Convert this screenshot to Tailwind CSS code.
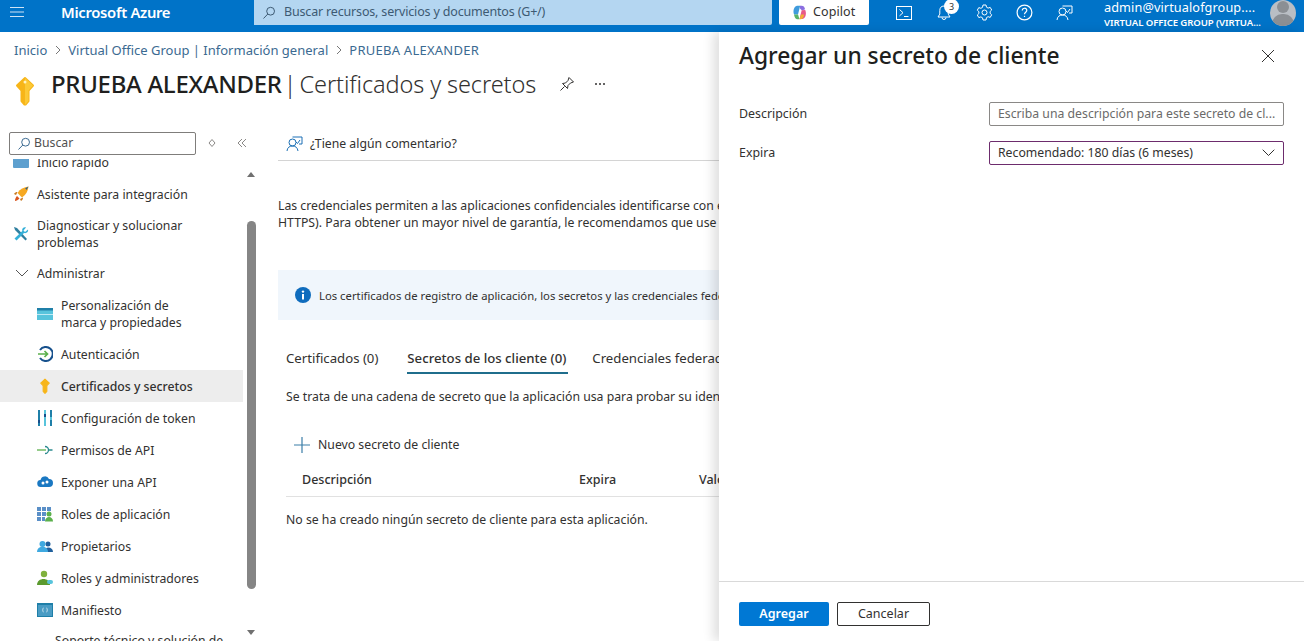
<!DOCTYPE html>
<html lang="es"><head><meta charset="utf-8"><script src="https://cdn.jsdelivr.net/npm/@tailwindcss/browser@4"></script></head>
<body class="font-['Noto_Sans',sans-serif] text-[#323130] bg-white">
<div class="relative w-[1304px] h-[641px] overflow-hidden flex flex-col">
<!-- top bar -->
<header class="h-8 shrink-0 bg-[#0073c8] text-white flex items-start">
  <div class="w-[33px] h-[24px] flex items-center justify-center">
    <svg width="16" height="12" viewBox="0 0 16 12" stroke="#cfe4f6" stroke-width="1.2"><path d="M1 1.5h14M1 6h14M1 10.5h14"/></svg>
  </div>
  <div class="ml-7 w-[193px] h-[25px] leading-[25px] text-[14.8px] font-semibold tracking-[-0.3px]">Microsoft Azure</div>
  <div class="w-[518px] h-[25px] bg-[#b4d6f1] rounded-br-[2px] flex items-center pl-2 text-[12.5px] text-[#3d5a73]">
    <svg width="14" height="14" viewBox="0 0 14 14" fill="none" stroke="#3d5a73" stroke-width="1" class="mr-[8px]"><circle cx="8.6" cy="5.2" r="3.9"/><path d="M5.8 8 1.5 12.5"/></svg>
    <span class="tracking-[-0.17px]">Buscar recursos, servicios y documentos (G+/)</span>
  </div>
  <div class="ml-[7px] w-[90px] h-[25px] bg-white rounded-b-[2px] flex items-center pl-[13px] gap-[6px] text-[12.5px] text-[#323130]">
    <svg width="15" height="15" viewBox="0 0 15 15"><path d="M5 .8h3.2L6 9.5H2.2C.6 7 1.6 1.6 5 .8Z" fill="#3f9bdc"/><path d="M8 .8h1.5c2 0 3 1 3.6 3.5L10 5.5 8 3.5Z" fill="#8a6ee0"/><path d="M13.2 5c1.5 3.5.6 8-2.7 9H7.5L9.7 5.3Z" fill="#e85a8a"/><path d="M2 9.5h4l1.5 4.7H5c-1.6 0-2.6-2-3-4.7Z" fill="#58b368"/><path d="M7.5 14.2 9 9.5h3.2c-.4 2.4-1.6 4.7-3.2 4.7Z" fill="#f2b035"/></svg>
    <span class="tracking-[0.1px]">Copilot</span>
  </div>
  <div class="ml-[15px] flex w-[200px] h-[25px] items-center">
    <div class="w-10 flex justify-center"><svg width="16" height="14" viewBox="0 0 16 14" fill="none" stroke="#fff" stroke-width="1"><rect x=".5" y=".5" width="15" height="13"/><path d="m3.5 3.5 3.5 3.2-3.5 3.2M8 10.500h4.500"/></svg></div>
    <div class="w-10 flex justify-center relative"><svg width="16" height="17" viewBox="0 0 16 17" fill="none" stroke="#fff" stroke-width="1"><path d="M8 2C5 2 3.800 4 3.800 6.500v3.600L2 13h12l-1.800-2.900V6.500C12.200 4 11 2 8 2ZM6 13.500a2 2 0 0 0 4 0"/></svg>
      <span class="absolute left-[20px] top-[-5px] w-[15px] h-[15px] rounded-full bg-white text-[#323130] text-[9px] leading-[15px] text-center">3</span></div>
    <div class="w-10 flex justify-center"><svg width="17" height="17" viewBox="0 0 17 17" fill="none" stroke="#fff" stroke-width="1"><path d="M7 1h3l.5 2.200 1.600.9 2.100-.7 1.500 2.600-1.600 1.500v1.800l1.600 1.500-1.500 2.600-2.100-.7-1.600.9L10 16H7l-.5-2.200-1.600-.9-2.100.7L1.300 11l1.600-1.500V7.700L1.300 6.200l1.500-2.600 2.100.7 1.600-.9Z"/><circle cx="8.500" cy="8.500" r="2.500"/></svg></div>
    <div class="w-10 flex justify-center"><svg width="17" height="17" viewBox="0 0 17 17" fill="none" stroke="#fff" stroke-width="1.200"><circle cx="8.500" cy="8.500" r="7.400"/><path d="M6.300 6.500c0-3 4.500-3 4.500-.2 0 2-2.300 1.800-2.300 4"/><path d="M8.500 11.800v1.200"/></svg></div>
    <div class="w-10 flex justify-center"><svg width="17" height="17" viewBox="0 0 17 17" fill="none" stroke="#fff" stroke-width="1"><path d="M6.500 2H16v7h-3"/><path d="m10 7 1.500 1.500L14 5"/><circle cx="6.500" cy="7.500" r="3.500"/><path d="M1 16c.3-3.500 2.500-5 5.500-5s5 1.500 5.500 5"/></svg></div>
  </div>
  <div class="ml-5 w-[166px] h-8 relative">
    <div class="text-[12.7px] leading-[14px] whitespace-nowrap tracking-[0.1px]">admin@virtualofgroup....</div>
    <div class="text-[9.6px] leading-[12px] mt-[3px] font-semibold whitespace-nowrap tracking-[-0.1px]">VIRTUAL OFFICE GROUP (VIRTUA...</div>
  </div>
  <div class="w-[26px] h-[26px] rounded-full bg-[#b9bec4] overflow-hidden relative shrink-0">
    <span class="absolute left-[7px] top-[1px] w-3 h-3 rounded-full bg-[#8b8f94]"></span>
    <span class="absolute left-[2px] top-[14px] w-[22px] h-5 rounded-full bg-[#8b8f94]"></span>
  </div>
</header>
<!-- page -->
<div class="pt-[9px] pl-[14px] h-[18px] box-content text-[13px] leading-[18px] text-[#3b6a91] flex items-center whitespace-nowrap">
  <span>Inicio</span>
  <svg width="8" height="10" viewBox="0 0 8 10" fill="none" stroke="#777" class="mx-[6.5px]"><path d="m2 1 4 4-4 4"/></svg>
  <span>Virtual Office Group | Información general</span>
  <svg width="8" height="10" viewBox="0 0 8 10" fill="none" stroke="#777" class="mx-[6.5px]"><path d="m2 1 4 4-4 4"/></svg>
  <span class="tracking-[0.25px]">PRUEBA ALEXANDER</span>
</div>
<div class="mt-[7px] h-[36px] pl-[15px] flex items-center whitespace-nowrap">
  <svg width="20" height="30" viewBox="0 0 20 30" class="mr-[16px] mt-[14px] shrink-0"><path d="M10 2 18 9.500 13.500 14.500V25l-3 3.500h-1L6.500 25V14.500L2 9.500Z" fill="#f7b519" stroke="#f7b519" stroke-width="2" stroke-linejoin="round"/><path d="M10 2 18 9.500 13.500 14.500V25l-3 3.500H10Z" fill="#fcc936"/><circle cx="10" cy="6" r="1.500" fill="#fff3c4"/></svg>
  <span class="text-[24px] leading-[36px] font-medium text-[#201f1e] tracking-[-0.3px]">PRUEBA ALEXANDER</span>
  <span class="text-[23.5px] leading-[36px] font-light text-[#323130] ml-[2px] -mr-[3px]">|</span>
  <span class="text-[23.5px] leading-[36px] font-light text-[#323130] ml-[6px] tracking-[-0.1px]">Certificados y secretos</span>
  <svg width="16" height="16" viewBox="0 0 16 16" fill="none" stroke="#323130" class="ml-[23px]"><path d="M10 1.500 14.500 6l-3 1-2.500 2.500-.5 3L3.500 7.500l3-.5L9 4.500ZM5.500 10.500 1.500 14.500"/></svg>
  <span class="ml-[20px] flex gap-[2px] mb-[1px]"><i class="w-[2px] h-[2px] bg-[#323130] rounded-full"></i><i class="w-[2px] h-[2px] bg-[#323130] rounded-full"></i><i class="w-[2px] h-[2px] bg-[#323130] rounded-full"></i></span>
</div>
<div class="flex flex-1 min-h-0 mt-[30px]">
  <!-- sidebar -->
  <aside class="w-[278px] shrink-0 flex flex-col min-h-0 relative">
    <div class="h-[27px] flex items-start shrink-0">
      <div class="ml-[9px] w-[187px] h-[23px] border border-[#7f7d7b] rounded-[2px] flex items-center pl-[7px] text-[12.25px] text-[#505050]">
        <svg width="14" height="14" viewBox="0 0 14 14" fill="none" stroke="#3b6a91" class="mr-[3px]"><circle cx="8.600" cy="5.200" r="3.900"/><path d="M5.800 8 1.500 12.500"/></svg>Buscar
      </div>
      <svg width="10" height="10" viewBox="0 0 10 10" fill="none" stroke="#8a8886" class="ml-[11px] mt-[6px]"><path d="M5 1.500 8 5 5 8.500 2 5Z"/></svg>
      <svg width="10" height="10" viewBox="0 0 10 10" fill="none" stroke="#8a8886" class="ml-[20px] mt-[6px]"><path d="M5 1 1 5l4 4M9 1 5 5l4 4"/></svg>
    </div>
    <div class="flex min-h-0 flex-1">
      <nav class="w-[243px] shrink-0 overflow-hidden text-[12.25px] leading-[17px] text-[#323130]">
        <div class="-mt-[13px]">
          <div class="h-8 flex items-center pl-[13px]"><svg width="16" height="14" viewBox="0 0 16 14" class="mr-2"><rect y="1" width="16" height="12" rx="1" fill="#5ea0cf"/></svg>Inicio rápido</div>
          <div class="h-8 flex items-center pl-[13px]"><svg width="16" height="16" viewBox="0 0 16 16" class="mr-2"><path d="M15.500.5C11 1 7 3 4.500 7l4.500 4.500C13 9 15 5 15.500.5Z" fill="#f6a821"/><path d="M2 15c0-2 .8-4 2-5l2.500 2.500C5 14 3.500 15 2 15Z" fill="#d9541e"/><path d="M1 8c1-1.500 2-2 3.500-2L3 9ZM8 15c1.500-1 2-2 2-3.500L7 13Z" fill="#c9791e"/><path d="M12 2.500c.8.200 1.300.7 1.500 1.500L15.500.5Z" fill="#1f5f9c"/></svg>Asistente para integración</div>
          <div class="h-12 flex items-center pl-[13px]"><svg width="16" height="16" viewBox="0 0 16 16" class="mr-2 shrink-0"><path d="M1 1l3 1 10 11-1.500 1.500L2 4Z" fill="#2f7f9f"/><path d="M15 3.500 12 6 10.500 4.500 13 1.500c-2-.8-4.500 1-3.700 3.500L1.500 12.500l2 2L11 7c2.500.8 4.700-1.500 4-3.500Z" fill="#35b0d8"/></svg><span>Diagnosticar y solucionar<br>problemas</span></div>
          <div class="h-[31px] flex items-center pl-[15px]"><svg width="14" height="9" viewBox="0 0 14 9" fill="none" stroke="#555" class="mr-[8px]"><path d="m1 1 6 6 6-6"/></svg>Administrar</div>
          <div class="h-[49px] flex items-center pl-[37px]"><svg width="16" height="12" viewBox="0 0 16 12" class="mr-2 shrink-0"><rect width="16" height="12" fill="#58c4dc"/><rect width="16" height="2.500" fill="#1f7fa8"/><rect y="6" width="16" height="1" fill="#bfeaf4"/></svg><span>Personalización de<br>marca y propiedades</span></div>
          <div class="h-8 flex items-center pl-[37px]"><svg width="16" height="16" viewBox="0 0 16 16" fill="none" class="mr-2"><path d="M3 4a7 7 0 1 1 0 8" stroke="#16508c" stroke-width="2"/><path d="M1 8h9M7.500 5 10.500 8l-3 3" stroke="#5bb04c" stroke-width="1.700"/></svg>Autenticación</div>
          <div class="h-8 flex items-center pl-[37px] bg-[#ededed] font-medium"><svg width="16" height="16" viewBox="0 0 20 30" class="mr-2"><path d="M10 2 18 9.500 13.500 14.500V25l-3 3.500h-1L6.500 25V14.500L2 9.500Z" fill="#f7b519" stroke="#f7b519" stroke-width="2" stroke-linejoin="round"/></svg>Certificados y secretos</div>
          <div class="h-8 flex items-center pl-[37px]"><svg width="16" height="16" viewBox="0 0 16 16" class="mr-2"><rect x="1" width="2" height="16" fill="#1f7fa8"/><rect x="7" width="2" height="16" fill="#58c4dc"/><rect x="13" width="2" height="16" fill="#1f7fa8"/><rect x="1" y="10" width="2" height="3" fill="#16508c"/><rect x="7" y="4" width="2" height="3" fill="#16508c"/><rect x="13" y="7" width="2" height="3" fill="#58c4dc"/></svg>Configuración de token</div>
          <div class="h-8 flex items-center pl-[37px]"><svg width="16" height="16" viewBox="0 0 16 16" fill="none" class="mr-2"><path d="M0 8h9" stroke="#5bb04c" stroke-width="1.300"/><path d="M8 4.500a3.500 3.500 0 0 1 0 7M11.500 8h4" stroke="#2b8a8f" stroke-width="1.300"/></svg>Permisos de API</div>
          <div class="h-8 flex items-center pl-[37px]"><svg width="16" height="16" viewBox="0 0 16 16" class="mr-2"><path d="M4 13a3.500 3.500 0 0 1-.500-7A4.500 4.500 0 0 1 12 5a4 4 0 0 1 0 8Z" fill="#1a78c2"/><circle cx="6" cy="9" r="1.500" fill="#fff"/><circle cx="10" cy="8" r="1.500" fill="#fff"/></svg>Exponer una API</div>
          <div class="h-8 flex items-center pl-[37px]"><svg width="16" height="16" viewBox="0 0 16 16" class="mr-2"><path d="M0 1h4v4H0ZM5 1h4v4H5ZM10 1h4v4h-4ZM0 6h4v4H0ZM5 6h4v4H5ZM0 11h4v4H0ZM5 11h3v4H5Z" fill="#5a8fc7"/><circle cx="12" cy="8" r="2.500" fill="#5bb04c"/><path d="M8 15.500c0-6 8-6 8 0Z" fill="#5bb04c"/></svg>Roles de aplicación</div>
          <div class="h-8 flex items-center pl-[37px]"><svg width="16" height="16" viewBox="0 0 16 16" class="mr-2"><circle cx="11" cy="6" r="2.500" fill="#1f5f9c"/><path d="M7 14c0-6 9-6 9 0Z" fill="#1f5f9c"/><circle cx="5.500" cy="6" r="3" fill="#3fa9e0"/><path d="M0 14c0-7 11-7 11 0Z" fill="#3fa9e0"/></svg>Propietarios</div>
          <div class="h-8 flex items-center pl-[37px]"><svg width="16" height="16" viewBox="0 0 16 16" class="mr-2"><circle cx="7" cy="4" r="3.200" fill="#7fb13c"/><path d="M0 15c0-8 13-8 13 0Z" fill="#5b9a2e"/><rect x="10" y="10" width="6" height="4" rx="2" fill="#58c4dc"/></svg>Roles y administradores</div>
          <div class="h-8 flex items-center pl-[37px]"><svg width="16" height="14" viewBox="0 0 16 14" class="mr-2"><rect width="16" height="14" fill="#1f7fa8"/><rect y="2" x="1" width="14" height="11" fill="#4a9cc4"/><path d="M6.500 5c-1 0-.5 2-1 2 .5 0 0 2 1 2M9.500 5c1 0 .5 2 1 2-.500 0 0 2-1 2" stroke="#fff" stroke-width=".7" fill="none"/></svg>Manifiesto</div>
          <div class="pt-[6px] pl-[55px] whitespace-nowrap">Soporte técnico y solución de</div>
        </div>
      </nav>
      <div class="w-[10px] ml-[3px] flex flex-col items-center relative">
        <span class="mt-[13px] w-0 h-0 border-x-[4px] border-x-transparent border-b-[5px] border-b-[#707070]"></span>
        <span class="mt-[44px] w-[9px] h-[368px] rounded-full bg-[#858585]"></span>
        <span class="mt-[41px] w-0 h-0 border-x-[4px] border-x-transparent border-t-[5px] border-t-[#707070]"></span>
      </div>
    </div>
  </aside>
  <!-- content -->
  <main class="flex-1 min-w-0 overflow-hidden text-[12.25px] leading-[17px] text-[#323130] -mt-[5px]">
    <div class="h-[34px] border-b border-[#d4d4d4] w-[460px] flex items-center pl-[8px] whitespace-nowrap">
      <svg width="17" height="17" viewBox="0 0 17 17" fill="none" stroke="#1a6fb5" class="mr-[7px]"><path d="M6.500 2H16v7h-3"/><path d="m10 7 1.500 1.500L14 5"/><circle cx="6.500" cy="7.500" r="3.500"/><path d="M1 16c.3-3.500 2.500-5 5.500-5s5 1.500 5.500 5"/></svg>¿Tiene algún comentario?
    </div>
    <div class="mt-[36px] whitespace-nowrap">Las credenciales permiten a las aplicaciones confidenciales identificarse con el servicio de autenticación<br>HTTPS). Para obtener un mayor nivel de garantía, le recomendamos que use un certificado</div>
    <div class="mt-[39px] h-[50px] bg-[#f0f6fc] flex items-center pl-[17px] text-[11.3px] whitespace-nowrap">
      <svg width="16" height="16" viewBox="0 0 16 16" class="mr-[8px] shrink-0"><circle cx="8" cy="8" r="8" fill="#0f6cbd"/><rect x="7" y="7" width="2" height="5.500" fill="#fff"/><circle cx="8" cy="4.600" r="1.200" fill="#fff"/></svg>Los certificados de registro de aplicación, los secretos y las credenciales federadas se pueden
    </div>
    <div class="mt-[30px] pl-[8px] h-[24px] flex whitespace-nowrap text-[13.2px]">
      <div>Certificados (0)</div>
      <div class="ml-[29px] h-[24px] border-b-2 border-[#1f6d8c] font-medium w-[161px]">Secretos de los cliente (0)</div>
      <div class="ml-[24px]">Credenciales federadas (0)</div>
    </div>
    <div class="mt-[14px] pl-[8px] whitespace-nowrap">Se trata de una cadena de secreto que la aplicación usa para probar su identidad</div>
    <div class="mt-[31px] pl-[16px] flex items-center whitespace-nowrap">
      <svg width="16" height="16" viewBox="0 0 16 16" stroke="#3b7ea8" stroke-width="1.200" class="mr-[8px]"><path d="M8 0v16M0 8h16"/></svg>Nuevo secreto de cliente
    </div>
    <div class="mt-[9px] ml-[8px] h-[35px] border-b border-[#e1e1e1] flex pt-[9px] font-medium whitespace-nowrap w-[452px] text-[12.5px]">
      <span class="ml-[16px] w-[277px]">Descripción</span><span class="w-[120px]">Expira</span><span>Valor</span>
    </div>
    <div class="mt-[14px] pl-[8px] whitespace-nowrap">No se ha creado ningún secreto de cliente para esta aplicación.</div>
  </main>
</div>
<!-- panel -->
<section class="absolute left-[719px] top-8 bottom-0 right-0 bg-white shadow-[-6px_0_10px_rgba(0,0,0,0.12)] flex flex-col">
  <div class="h-[48px] pl-5 pr-[29px] flex items-center justify-between">
    <h2 class="text-[22.8px] font-medium text-[#201f1e] leading-[48px] whitespace-nowrap">Agregar un secreto de cliente</h2>
    <svg width="14" height="14" viewBox="0 0 14 14" stroke="#323130"><path d="m1 1 12 12M13 1 1 13"/></svg>
  </div>
  <div class="flex-1 pl-5 pr-5 pt-[22px] text-[12.25px]">
    <div class="flex items-center h-[24px]">
      <label class="w-[250px] text-[12.4px]">Descripción</label>
      <div class="w-[295px] h-[24px] border border-[#8a8886] rounded-[2px] flex items-center pl-2 text-[#6b6a69] whitespace-nowrap overflow-hidden">Escriba una descripción para este secreto de cl...</div>
    </div>
    <div class="flex items-center h-[24px] mt-[15px]">
      <label class="w-[250px] text-[12.4px]">Expira</label>
      <div class="w-[295px] h-[24px] border border-[#6d2c6d] rounded-[2px] flex items-center justify-between pl-2 pr-[8px] whitespace-nowrap">Recomendado: 180 días (6 meses)
        <svg width="13" height="8" viewBox="0 0 13 8" fill="none" stroke="#323130"><path d="m.7.700 5.800 5.800L12.300.700"/></svg>
      </div>
    </div>
  </div>
  <div class="h-[60px] border-t border-[#d9d9d9] pl-5 pt-5 flex gap-2 text-[12.5px]">
    <button class="w-[90px] h-[24px] rounded-[2px] bg-[#0078d4] text-white font-semibold">Agregar</button>
    <button class="w-[93px] h-[24px] rounded-[2px] border border-[#323130] text-[#323130]">Cancelar</button>
  </div>
</section>
</div>
</body></html>
